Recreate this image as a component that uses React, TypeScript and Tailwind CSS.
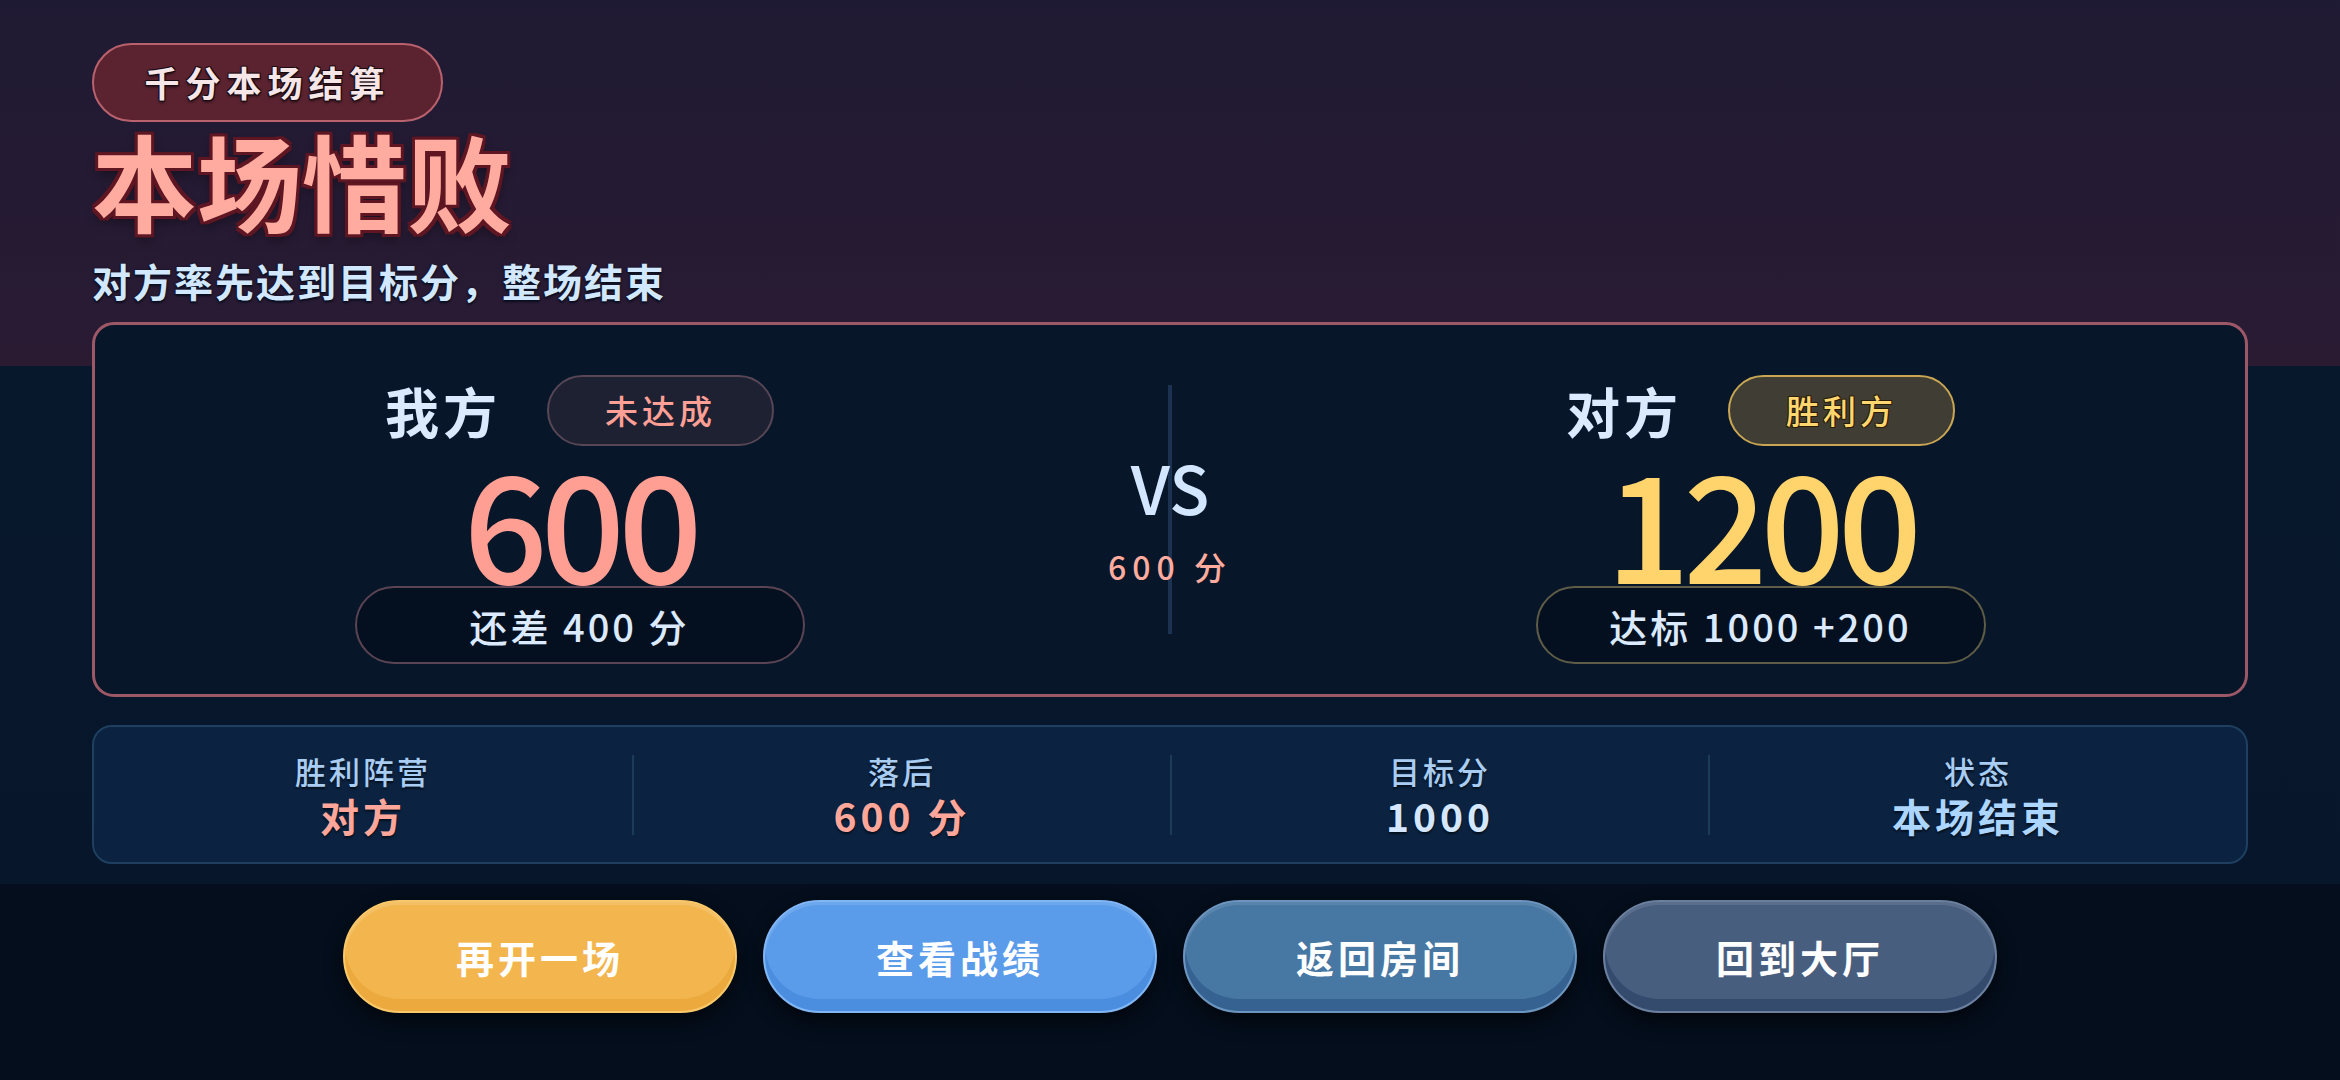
const stats = [
  { label: "胜利阵营", value: "对方", color: "text-[#ffa69b]" },
  { label: "落后", value: "600 分", color: "text-[#ffa69b]" },
  { label: "目标分", value: "1000", color: "text-[#d4e7ff]" },
  { label: "状态", value: "本场结束", color: "text-[#acd5ff]" },
];

const actions = [
  {
    label: "再开一场",
    cls: "bg-[#f3b54d] border-[#f8c86a] shadow-[inset_0_-12px_0_rgba(214,140,20,0.25),inset_0_3px_0_rgba(255,255,255,0.15),0_8px_18px_rgba(0,0,0,0.55)]",
  },
  {
    label: "查看战绩",
    cls: "bg-[#5b9cea] border-[#80b6f4] shadow-[inset_0_-12px_0_rgba(40,110,200,0.3),inset_0_3px_0_rgba(255,255,255,0.12),0_8px_18px_rgba(0,0,0,0.55)]",
  },
  {
    label: "返回房间",
    cls: "bg-[#4777a3] border-[#6c95bf] shadow-[inset_0_-12px_0_rgba(20,60,110,0.35),inset_0_3px_0_rgba(255,255,255,0.1),0_8px_18px_rgba(0,0,0,0.55)]",
  },
  {
    label: "回到大厅",
    cls: "bg-[#485e7f] border-[#6b809e] shadow-[inset_0_-12px_0_rgba(20,40,80,0.35),inset_0_3px_0_rgba(255,255,255,0.1),0_8px_18px_rgba(0,0,0,0.55)]",
  },
];

function SideScore({
  name,
  badge,
  badgeCls,
  score,
  scoreCls,
  note,
  noteCls,
}: {
  name: string;
  badge: string;
  badgeCls: string;
  score: string;
  scoreCls: string;
  note: string;
  noteCls: string;
}) {
  return (
    <div className="flex flex-col items-center pt-[50px]">
      <div className="flex h-[71px] items-center gap-[46px]">
        <span className="text-[54px] font-bold leading-none tracking-[4px] text-[#dceaff]">{name}</span>
        <span
          className={`flex h-[71px] w-[227px] items-center justify-center rounded-full border-2 text-[33px] font-medium tracking-[4px] ${badgeCls}`}
        >
          {badge}
        </span>
      </div>
      <div className={`text-[148px] font-medium leading-none tracking-[-7px] ${scoreCls}`}>{score}</div>
      <div
        className={`-mt-[8px] flex h-[78px] w-[450px] items-center justify-center rounded-full border-2 bg-[#04101f] text-[38px] font-medium tracking-[3px] text-[#dceaff] ${noteCls}`}
      >
        {note}
      </div>
    </div>
  );
}

export default function App() {
  return (
    <div className="flex h-[1080px] w-full flex-col overflow-hidden bg-[linear-gradient(180deg,#1f1a33_0px,#2a1b33_366px,#08182c_366px,#07162a_884px)] font-['Noto_Sans_CJK_SC','Noto_Sans',sans-serif]">
      {/* header */}
      <div className="px-[92px] pt-[43px]">
        <div className="flex h-[79px] w-[351px] items-center justify-center rounded-full border-2 border-[#b9626e] bg-[#5b2330] text-[35px] font-bold tracking-[6px] text-[#f6e6e8] [text-shadow:-1px_-1px_0_#1a0b12,1px_-1px_0_#1a0b12,-1px_1px_0_#1a0b12,1px_1px_0_#1a0b12,0_2px_3px_#1a0b12]">
          千分本场结算
        </div>
        <h1 className="mt-[4px] text-[105px] font-bold leading-none text-[#ffaba0] [text-shadow:-3px_-3px_0_#5e1622,3px_-3px_0_#5e1622,-3px_3px_0_#5e1622,3px_3px_0_#5e1622,0_-3px_0_#5e1622,0_3px_0_#5e1622,-3px_0_0_#5e1622,3px_0_0_#5e1622,0_6px_12px_rgba(0,0,0,0.4)]">
          本场惜败
        </h1>
        <p className="mt-[30px] text-[39px] font-bold leading-none tracking-[2px] text-[#d2e8ff] [text-shadow:0_0_2px_#0a0f20,0_2px_2px_#0a0f20]">
          对方率先达到目标分，整场结束
        </p>
      </div>

      {/* score card */}
      <div className="mx-[92px] mt-[22px] grid h-[375px] grid-cols-[1fr_212px_1fr] rounded-[22px] border-[3px] border-[#9d5867] bg-[#071629]">
        <SideScore
          name="我方"
          badge="未达成"
          badgeCls="border-[#564656] bg-[#1d2132] text-[#ff9f95]"
          score="600"
          scoreCls="text-[#ff9e93]"
          note="还差 400 分"
          noteCls="border-[#5a4453]"
        />
        <div className="flex flex-col items-center justify-center bg-[linear-gradient(#1b3350,#1b3350)] bg-[length:4px_249px] bg-center bg-no-repeat pt-[16px]">
          <div className="text-[66px] font-medium leading-none text-[#d3e6ff]">VS</div>
          <div className="mt-[31px] text-[32px] font-medium leading-none tracking-[6px] text-[#ffab9d]">600 分</div>
        </div>
        <SideScore
          name="对方"
          badge="胜利方"
          badgeCls="border-[#c9a653] bg-[#403d34] font-bold text-[#ffd66f] [text-shadow:-1px_-1px_0_#2a1d05,1px_-1px_0_#2a1d05,-1px_1px_0_#2a1d05,1px_1px_0_#2a1d05]"
          score="1200"
          scoreCls="text-[#ffd46c]"
          note="达标 1000 +200"
          noteCls="border-[#5f5c47]"
        />
      </div>

      {/* stats */}
      <div className="mx-[92px] mt-[28px] grid h-[139px] grid-cols-4 items-center rounded-[20px] border-2 border-[#1e3f60] bg-[#0b2341]">
        {stats.map((s, i) => (
          <div
            key={s.label}
            className={`flex h-[80px] flex-col items-center justify-center ${i > 0 ? "border-l-2 border-[#1c3b5b]" : ""}`}
          >
            <div className="text-[31px] font-medium leading-none tracking-[3px] text-[#a9cdf2] [text-shadow:0_2px_2px_#04101e]">
              {s.label}
            </div>
            <div className={`mt-[10px] text-[39px] font-bold leading-none tracking-[4px] ${s.color} [text-shadow:0_2px_2px_#04101e]`}>
              {s.value}
            </div>
          </div>
        ))}
      </div>

      {/* actions */}
      <div className="mt-[20px] flex flex-1 justify-center gap-[26px] bg-[#040e1c] pt-[16px]">
        {actions.map((a) => (
          <button
            key={a.label}
            className={`flex h-[113px] w-[394px] items-center justify-center rounded-full border-2 text-[38px] font-bold tracking-[4px] text-white ${a.cls}`}
          >
            {a.label}
          </button>
        ))}
      </div>
    </div>
  );
}
